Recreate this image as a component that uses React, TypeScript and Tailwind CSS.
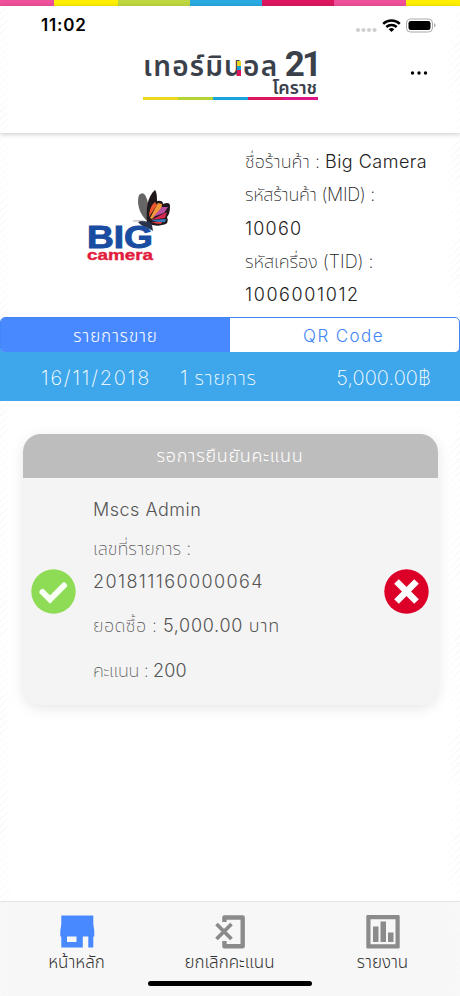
import type { ReactNode } from "react";

const STRIPES = [
  "w-[54px] bg-[#f0509b]",
  "w-[64px] bg-[#fff000]",
  "w-[72px] bg-[#bfd83f]",
  "w-[72px] bg-[#29abe2]",
  "w-[72px] bg-[#dc1760]",
  "w-[72px] bg-[#f0509b]",
  "w-[54px] bg-[#fff000]",
];

const hatch =
  "bg-[repeating-linear-gradient(135deg,#ffffff_0px,#ffffff_4px,#f3f3f3_4px,#f3f3f3_5px)]";

function Line({ children, className = "" }: { children: ReactNode; className?: string }) {
  return <div className={"whitespace-nowrap " + className}>{children}</div>;
}

function StatusBar() {
  return (
    <div className="flex h-[38px] items-center justify-between pl-[41px] pr-[24px]">
      <span className="pt-[2px] font-['Inter'] text-[17px] font-semibold tracking-[0.8px] text-black">11:02</span>
      <svg className="mt-px" width="81" height="16" viewBox="0 0 81 16">
        <g fill="#cfcfcf">
          <circle cx="3" cy="12" r="2.100" />
          <circle cx="8.500" cy="12" r="2.100" />
          <circle cx="14" cy="12" r="2.100" />
          <circle cx="19.500" cy="12" r="2.100" />
        </g>
        <g fill="none" stroke="#000" strokeWidth="2.500">
          <path d="M28.200 5.800a12 12 0 0 1 16.600 0" />
          <path d="M31.300 9a7.700 7.700 0 0 1 10.400 0" />
        </g>
        <path d="M33.700 11.200a4.400 4.400 0 0 1 5.600 0L36.500 14z" />
        <rect x="51.500" y="1" width="26" height="13" rx="4" fill="none" stroke="#aaa" />
        <rect x="53.500" y="3" width="22" height="9" rx="2.300" />
        <path d="M79 5v4.400q1.500-.6 1.500-2.200t-1.500-2.200z" fill="#aaa" />
      </svg>
    </div>
  );
}

function MallLogo() {
  return (
    <div className="ml-[143px] w-[175px] font-['Noto_Sans_Thai','Noto_Sans',sans-serif] text-[#3a414b]">
      <div className="flex h-[35px] items-end justify-between whitespace-nowrap">
        <span className="-mb-[5px] text-[28px] font-semibold leading-[33px] tracking-[1.200px]">
          <span className="relative">
            เทอร์มินอล
            <span className="absolute left-[94px] top-[15px] h-[15px] w-[4px] bg-[linear-gradient(#e5d51c_35%,#159fd8_35%,#159fd8_60%,#dc1760_60%)]" />
          </span>
        </span>
        <span className="-mb-[3px] -mr-[1px] font-['Roboto'] text-[35px] font-bold leading-[35px] tracking-[-3px]">21</span>
      </div>
      <div className="h-[16px] pr-[1px] pt-px text-right text-[18px] font-semibold leading-[18px]">โคราช</div>
      <div className="mt-[2px] flex h-[3px]">
        <div className="w-[35px] bg-[#ecd91f]" />
        <div className="w-[35px] bg-[#b5d334]" />
        <div className="w-[35px] bg-[#18a4db]" />
        <div className="w-[35px] bg-[#d9165f]" />
        <div className="w-[35px] bg-[#dc1686]" />
      </div>
    </div>
  );
}

function ShopLogo() {
  return (
    <svg width="90" height="80" viewBox="0 0 90 80">
      <text x="1" y="57.500" fontFamily="Liberation Sans" fontWeight="700" fontSize="32" fill="#1a4da1" stroke="#1a4da1" strokeWidth="1" textLength="66" lengthAdjust="spacingAndGlyphs">BIG</text>
      <text x="1" y="69.500" fontFamily="Liberation Sans" fontWeight="700" fontSize="15.500" fill="#e21b3c" stroke="#e21b3c" strokeWidth=".4" textLength="66" lengthAdjust="spacingAndGlyphs">camera</text>
      <path d="M64 33C54 27 50 14 53 5Q59-1 62 13z" fill="#666" />
      <path d="M61 33C60 19 61 7 69 0Q71 2 71 11Q77 10 77 14Q84 11 84 16Q84 24 81 27Q84 34 76 35Q69 37 61 33z" fill="#20181c" />
      <path d="M63 27q0-10 6-15l2 3z" fill="#ed562e" />
      <path d="M64 28L72 13l4 1q1 5-10 15z" fill="#f39a38" />
      <path d="M67 27l9-10 6 0-4 6z" fill="#bd4f9f" />
      <path d="M65 30l16-8-2 6z" fill="#d82750" />
      <path d="M65 30l15-1-1 3q-7 1-14-2z" fill="#377abb" />
      <path d="M65 32l11 0-1 2q-5 0-10-2z" fill="#e53b43" />
      <path d="M52 32q5-2 8-.5l3-.5 3 4 1 6-7-4q-5-1-8-5z" fill="#29324b" />
      <path d="M47 31q6-1 13 1" fill="none" stroke="#777" strokeWidth=".6" />
    </svg>
  );
}

function NavItem({ icon, label, className }: { icon: ReactNode; label: string; className: string }) {
  return (
    <div className={"flex flex-col items-center " + className}>
      {icon}
      <span className="-mt-px whitespace-nowrap text-[17px] font-light leading-[24px] text-[#333]">{label}</span>
    </div>
  );
}

export default function App() {
  return (
    <div className={"flex h-[996px] w-[460px] flex-col overflow-hidden font-['Inter','Noto_Sans_Thai','Noto_Sans',sans-serif] font-light " + hatch}>
      <div className="flex h-[6px] shrink-0">
        {STRIPES.map((s, i) => <div key={i} className={s} />)}
      </div>
      <header className="relative z-10 h-[127px] shrink-0 bg-[linear-gradient(90deg,#ffffff66,#fff_14px,#fff_446px,#ffffff66)] shadow-[0_1px_5px_rgba(0,0,0,0.22)]">
        <StatusBar />
        <div className="flex items-start">
          <MallLogo />
          <svg className="ml-[92px] mt-[26px]" width="18" height="6" viewBox="0 0 18 6">
            <circle cx="2.500" cy="3" r="1.700" />
            <circle cx="9" cy="3" r="1.700" />
            <circle cx="15.500" cy="3" r="1.700" />
          </svg>
        </div>
      </header>

      <main className="flex flex-1 flex-col bg-[linear-gradient(90deg,#ffffff66,#fff_14px,#fff_446px,#ffffff66)]">
        <section className="flex h-[184px] shrink-0">
          <div className="w-[245px] pl-[86px] pt-[57px]"><ShopLogo /></div>
          <div className="pt-[12px] text-[18px] leading-[33.300px] text-[#222]">
            <Line><span className="font-extralight">ชื่อร้านค้า : </span><span className="tracking-[0.5px]">Big Camera</span></Line>
            <Line className="font-extralight tracking-[-0.3px]">รหัสร้านค้า (MID) :</Line>
            <Line className="tracking-[1.200px]">10060</Line>
            <Line className="font-extralight">รหัสเครื่อง (TID) :</Line>
            <Line className="tracking-[1.600px]">1006001012</Line>
          </div>
        </section>
        <div className="h-[35px] shrink-0 bg-[linear-gradient(#fff_60%,#3ea7ec_60%)]">
          <div className="flex h-[36px] overflow-hidden rounded-[5px] border border-[#4286f5] bg-white text-center text-[17px] leading-[36px]">
            <div className="w-[229px] bg-[#4889ff] tracking-[0.9px] text-white">รายการขาย</div>
            <div className="flex-1 pr-[2px] tracking-[1.400px] text-[#4286f5]">QR Code</div>
          </div>
        </div>
        <div className="flex h-[49px] shrink-0 items-center bg-[#3ea7ec] pl-[41px] pr-[29px] pt-[2px] text-[20px] font-extralight text-white">
          <span className="w-[139px] tracking-[1.800px]">16/11/2018</span>
          <span className="flex-1 tracking-[0.6px]">1 รายการ</span>
          <span className="tracking-[0.1px]">5,000.00฿</span>
        </div>

        <section className="ml-[22.500px] mt-[33px] h-[271px] w-[415px] overflow-hidden rounded-[18px] bg-[#f4f4f4] shadow-[0_3px_14px_rgba(0,0,0,0.10)]">
          <div className="h-[44px] bg-[#bdbdbd] text-center text-[18px] leading-[44px] tracking-[0.700px] text-white">รอการยืนยันคะแนน</div>
          <div className="flex h-[227px] items-center pl-[8.500px] pr-[9px]">
            <svg width="45" height="45" viewBox="0 0 45 45">
              <circle cx="22.500" cy="22.500" r="22.200" fill="#8edb55" />
              <path d="M11.500 23L19 30.500 33 16.500" fill="none" stroke="#f8fff5" strokeWidth="6" strokeLinecap="round" />
            </svg>
            <div className="h-[227px] flex-1 pl-[17px] pt-[15px] text-[18px] leading-[33px] text-[#555]">
              <Line className="tracking-[0.500px]">Mscs Admin</Line>
              <Line className="mt-[6px] font-extralight">เลขที่รายการ :</Line>
              <Line className="tracking-[1.400px]">201811160000064</Line>
              <Line className="mt-[11px]"><span className="font-extralight tracking-[0.4px]">ยอดซื้อ : </span><span className="tracking-[0.7px]">5,000.00 บาท</span></Line>
              <Line className="mt-[12px]"><span className="font-extralight tracking-[-0.4px]">คะแนน : </span><span className="tracking-[0.2px]">200</span></Line>
            </div>
            <svg width="45" height="45" viewBox="0 0 45 45">
              <circle cx="22.500" cy="22.500" r="22.200" fill="#dc0029" />
              <path d="M12.500 12.500L32.500 32.500M32.500 12.500L12.500 32.500" stroke="#fff" strokeWidth="6.500" />
            </svg>
          </div>
        </section>
      </main>

      <footer className="h-[95px] shrink-0 border-t border-[#e4e4e4] bg-[linear-gradient(90deg,#f7f7f7cc,#f7f7f7_14px,#f7f7f7_446px,#f7f7f7cc)]">
        <div className="flex h-[79px] pt-[13px]">
          <NavItem className="w-[153px]" label="หน้าหลัก" icon={
            <svg width="36" height="36" viewBox="0 0 36 36" fill="#4889ff">
              <path d="M2.300.5h32v8.500l1 7v5.500h-1v11h-5v-11h-5.500v11h-21.500v-11h-1V16l1-7zM8 21.500v5.500h9.500v-5.500z" fillRule="evenodd" />
            </svg>
          } />
          <NavItem className="w-[153px]" label="ยกเลิกคะแนน" icon={
            <svg width="36" height="36" viewBox="0 0 36 36" fill="none" stroke="#8b8b8b">
              <path d="M12.400 7V2.500H30.700V31.200H12.400V26" strokeWidth="4.400" strokeLinejoin="round" />
              <path d="M4.500 9L19.500 24M19.500 9L4.500 24" strokeWidth="3.800" />
            </svg>
          } />
          <NavItem className="w-[153px]" label="รายงาน" icon={
            <svg width="36" height="36" viewBox="0 0 36 36" fill="#8b8b8b">
              <path d="M2.500 0h31q1.200 0 1.200 1.200v31q0 1.200-1.200 1.200h-31q-1.200 0-1.200-1.200v-31Q1.300 0 2.500 0zM5.500 4.200v25h25v-25z" fillRule="evenodd" />
              <path d="M8 11.500h5.500v15.500H8zM15.500 6.500H21V27h-5.500zM23 17.500h5.500V27H23z" />
            </svg>
          } />
        </div>
        <div className="ml-[148px] h-[5px] w-[164px] rounded-full bg-black" />
      </footer>
    </div>
  );
}
